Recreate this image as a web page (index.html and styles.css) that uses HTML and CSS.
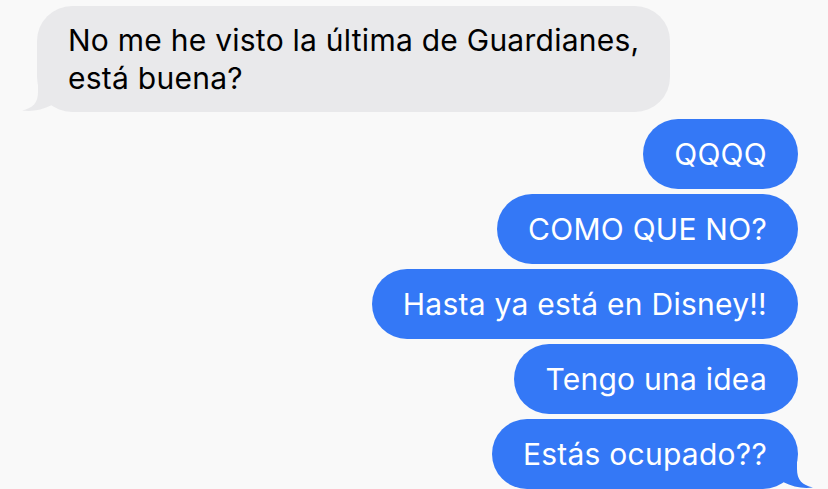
FILE: index.html
```html
<!DOCTYPE html>
<html lang="es">
  <head>
    <meta charset="UTF-8" />
    <meta name="viewport" content="width=device-width, initial-scale=1" />
    <title>Mensajes</title>
    <link rel="stylesheet" href="styles.css">
  </head>
  <body>
    <div class="chat">
      <div class="msg msg-in">
        No me he visto la última de Guardianes,<br />está buena?
        <svg class="tail tail-in" width="30" height="40" viewBox="0 0 30 40">
          <path d="M16 0 L16 20 C16 31 11 36 0 38.5 C10 40 20 38 30 33 L30 0 Z" />
        </svg>
      </div>
      <div class="msg msg-out">QQQQ</div>
      <div class="msg msg-out">COMO QUE NO?</div>
      <div class="msg msg-out">Hasta ya está en Disney!!</div>
      <div class="msg msg-out">Tengo una idea</div>
      <div class="msg msg-out last">
        Estás ocupado??
        <svg class="tail tail-out" width="30" height="40" viewBox="0 0 30 40">
          <path d="M14 0 L14 20 C14 31 19 36 30 38.5 C20 40 10 38 0 33 L0 0 Z" />
        </svg>
      </div>
    </div>
  </body>
</html>
```

FILE: styles.css
```css
html, body {
  margin: 0;
  height: 100%;
  overflow: hidden;
}
body {
  background: #f9f9f9;
  font-family: Inter, "Liberation Sans", sans-serif;
}
.chat {
  display: flex;
  flex-direction: column;
  gap: 5px;
  padding: 6px 30px 0 37px;
}
.msg {
  position: relative;
  font-size: 30px;
  letter-spacing: 0.25px;
  line-height: 38px;
  padding: 16px 31px;
  border-radius: 35px;
}
.msg-in {
  align-self: flex-start;
  background: #e9e9eb;
  color: #000;
  padding: 15px 31px;
  margin-bottom: 2px;
}
.msg-out {
  align-self: flex-end;
  background: #3478f6;
  color: #fff;
}
.tail {
  position: absolute;
  bottom: 0;
}
.tail-in {
  left: -15px;
  fill: #e9e9eb;
}
.tail-out {
  right: -15px;
  fill: #3478f6;
}
```
